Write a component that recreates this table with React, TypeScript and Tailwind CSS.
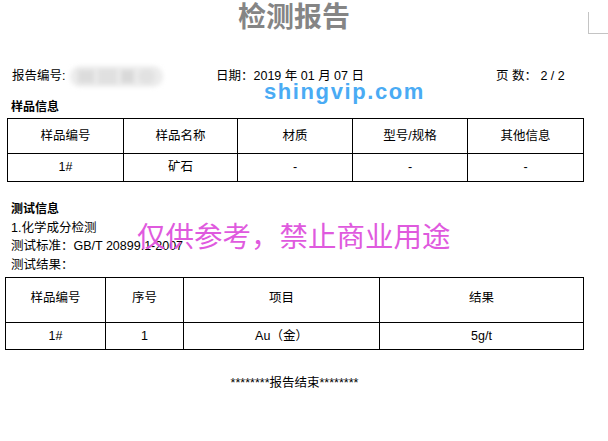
export default function App() {
  const sampleHead = ['样品编号', '样品名称', '材质', '型号/规格', '其他信息']
  const sampleRow = ['1#', '矿石', '-', '-', '-']
  const resultHead = ['样品编号', '序号', '项目', '结果']
  const resultRow = ['1#', '1', 'Au（金）', '5g/t']

  return (
    <div className="relative w-[608px] h-[441px] overflow-hidden bg-white text-black font-['Liberation_Sans','Noto_Sans_CJK_SC',sans-serif]">
      {/* title */}
      <h1 className="mt-[4px] w-[588px] h-[28px] text-center text-[28px] leading-[28px] font-bold text-[#858585]">
        检测报告
      </h1>
      <div className="absolute left-[588px] top-[12px] w-[20px] h-[22px] border-l border-b border-[#c4c4c4]" />

      {/* header line */}
      <div className="mt-[36px] h-[16px] flex items-center text-[12.5px] leading-[16px]">
        <div className="w-[216px] pl-[12px] flex items-center">
          <span>报告编号:</span>
          <div className="ml-[5px] h-[21px] w-[93px] rounded-[10px] bg-[#ececec] flex items-center gap-[4px] px-[8px] blur-[2px]">
            <div className="h-[13px] w-[16px] bg-[#dcdcdc]" />
            <div className="h-[15px] w-[20px] bg-[#e0e0e0]" />
            <div className="h-[13px] w-[14px] bg-[#d9d9d9]" />
            <div className="h-[15px] w-[18px] rounded-full bg-[#e2e2e2]" />
          </div>
        </div>
        <div className="w-[280px]">日期：2019 年 01 月 07 日</div>
        <div>页 数： 2 / 2</div>
      </div>

      {/* sample info */}
      <div className="mt-[15px] pl-[11px] h-[16px] text-[12px] leading-[16px] font-bold">样品信息</div>
      <div className="mt-[3px] ml-[7px] w-[577px] grid grid-cols-[116px_114px_115px_115px_116px] border-l border-t border-black text-[12.5px]">
        {sampleHead.map((h) => (
          <div key={h} className="h-[35px] flex items-center justify-center border-r border-b border-black">
            {h}
          </div>
        ))}
        {sampleRow.map((c, i) => (
          <div key={i} className="h-[28px] flex items-center justify-center border-r border-b border-black">
            {c}
          </div>
        ))}
      </div>

      {/* test info */}
      <div className="mt-[18px] pl-[11px] text-[12.5px] leading-[18.5px]">
        <div className="text-[12px] font-bold">测试信息</div>
        <div>1.化学成分检测</div>
        <div>测试标准：GB/T 20899.1-2007</div>
        <div>测试结果：</div>
      </div>
      <div className="mt-[3px] ml-[5px] w-[579px] grid grid-cols-[100px_78px_196px_204px] border-l border-t border-black text-[12.5px]">
        {resultHead.map((h) => (
          <div key={h} className="h-[45px] pb-[3px] flex items-center justify-center border-r border-b border-black">
            {h}
          </div>
        ))}
        {resultRow.map((c, i) => (
          <div key={i} className="h-[27px] flex items-center justify-center border-r border-b border-black">
            {c}
          </div>
        ))}
      </div>

      <div className="mt-[25px] w-[589px] h-[16px] text-center text-[12.5px] leading-[16px]">
        ********报告结束********
      </div>

      {/* watermarks */}
      <div className="absolute left-[264px] top-[81px] text-[22px] leading-[22px] font-bold tracking-[1.6px] text-[#4aabf4] font-['Liberation_Sans',sans-serif]">
        shingvip.com
      </div>
      <div className="absolute left-[137px] top-[221px] text-[28.5px] leading-[28.5px] text-[#df5ade] font-['Noto_Sans_CJK_SC',sans-serif]">
        仅供参考，禁止商业用途
      </div>
    </div>
  )
}
